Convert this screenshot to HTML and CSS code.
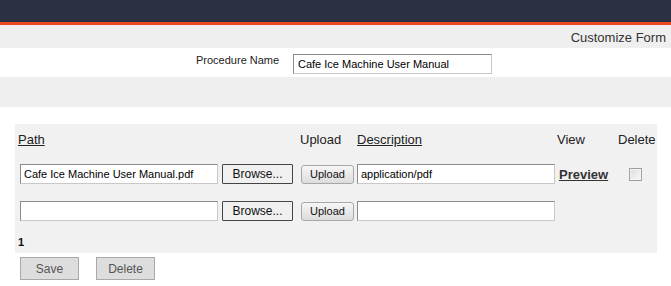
FILE: index.html
```html
<!DOCTYPE html>
<html lang="en">
<head>
  <meta charset="UTF-8">
  <title>Customize Form</title>
  <link rel="stylesheet" href="styles.css">
</head>
<body>

  <!-- Top bar -->
  <div class="topbar"></div>

  <!-- Title strip -->
  <div class="title-strip">Customize Form</div>

  <!-- Procedure name -->
  <div class="proc-row">
    <label class="proc-label" for="proc-name">Procedure Name</label>
    <input id="proc-name" class="proc-input" type="text" value="Cafe Ice Machine User Manual">
  </div>

  <div class="grey-band"></div>

  <!-- Attachments -->
  <div class="files-panel">
    <div class="files-grid">
      <a class="col-head link" href="#">Path</a>
      <span></span>
      <span class="col-head">Upload</span>
      <a class="col-head link" href="#">Description</a>
      <span class="col-head">View</span>
      <span class="col-head">Delete</span>

      <input class="path-input" type="text" value="Cafe Ice Machine User Manual.pdf">
      <button class="browse-btn">Browse...</button>
      <button class="upload-btn">Upload</button>
      <input class="desc-input" type="text" value="application/pdf">
      <a class="preview" href="#">Preview</a>
      <span class="del-cell"><input type="checkbox" class="del-check"></span>

      <input class="path-input" type="text" value="">
      <button class="browse-btn">Browse...</button>
      <button class="upload-btn">Upload</button>
      <input class="desc-input" type="text" value="">
      <span></span>
      <span></span>
    </div>
    <div class="page-num">1</div>
  </div>

  <!-- Actions -->
  <div class="actions">
    <button class="action-btn">Save</button>
    <button class="action-btn">Delete</button>
  </div>

</body>
</html>
```

FILE: styles.css
```css
/* Basic styling */
body {
  font-family: "Liberation Sans", Arial, sans-serif;
  margin: 0;
  padding: 0;
  background-color: #ffffff;
  color: #222;
}

/* Top bar */
.topbar {
  height: 22px;
  background-color: #2b3142;
  border-bottom: 3px solid #e8481f;
}

.title-strip {
  height: 23px;
  background-color: #efefef;
  text-align: right;
  font-size: 13px;
  line-height: 25px;
  padding-right: 5px;
  color: #333;
}

/* Procedure name row */
.proc-row {
  display: flex;
  align-items: flex-start;
  height: 29px;
  padding-left: 196px;
  box-sizing: border-box;
  padding-top: 6px;
}

.proc-label {
  font-size: 11px;
  width: 97px;
  line-height: 13px;
}

.proc-input {
  width: 199px;
  height: 20px;
  box-sizing: border-box;
  border: 1px solid #8c8c8c;
  border-right-color: #c8c8c8;
  border-bottom-color: #c8c8c8;
  font-family: "Liberation Sans", Arial, sans-serif;
  font-size: 11px;
  padding: 0 4px;
  margin: 0;
  color: #000;
}

.grey-band {
  height: 30px;
  background-color: #efefef;
  margin-bottom: 17px;
}

/* Files panel */
.files-panel {
  margin-left: 15px;
  width: 642px;
  background-color: #f1f1f1;
  padding: 8px 0 4px 3px;
  box-sizing: border-box;
}

.files-grid {
  display: grid;
  grid-template-columns: 204px 78px 57px 200px 61px auto;
  row-gap: 17px;
  align-items: center;
}

.col-head {
  font-size: 13px;
  line-height: 16px;
  color: #222;
  margin-bottom: -1px;
}

.link {
  color: #222;
  text-decoration: underline;
}

.path-input,
.desc-input {
  height: 20px;
  box-sizing: border-box;
  border: 1px solid #8c8c8c;
  border-right-color: #c8c8c8;
  border-bottom-color: #c8c8c8;
  font-family: "Liberation Sans", Arial, sans-serif;
  font-size: 11px;
  padding: 0 3px;
  margin: 0;
  color: #000;
  background: #fff;
}

.path-input {
  width: 198px;
  margin-left: 2px;
}

.desc-input {
  width: 198px;
}

.browse-btn {
  width: 71px;
  height: 20px;
  border: 1px solid #444;
  background-color: #f0f0f0;
  font-family: "Liberation Sans", Arial, sans-serif;
  font-size: 12px;
  color: #111;
  padding: 0;
  margin: 0;
  border-radius: 1px;
}

.upload-btn {
  width: 53px;
  height: 19px;
  margin: 0 0 0 1px;
  border: 1px solid #a8a8a8;
  border-radius: 3px;
  background: linear-gradient(#f6f6f6, #dcdcdc);
  font-family: "Liberation Sans", Arial, sans-serif;
  font-size: 11px;
  color: #111;
  padding: 0;
}

.preview {
  font-size: 13px;
  font-weight: bold;
  color: #333;
  text-decoration: underline;
  margin-left: 2px;
}

.del-cell {
  display: flex;
  padding-left: 11px;
}

.del-check {
  appearance: none;
  width: 13px;
  height: 13px;
  margin: 0;
  border: 1px solid #a0a0a0;
  background: linear-gradient(135deg, #dcdcdc, #fafafa);
  box-shadow: inset 0 0 0 1px #f4f4f4;
}

.page-num {
  font-size: 11px;
  font-weight: bold;
  margin-top: 15px;
  line-height: 13px;
  color: #111;
}

/* Action buttons */
.actions {
  display: flex;
  gap: 17px;
  padding: 4px 0 0 20px;
}

.action-btn {
  width: 59px;
  height: 23px;
  background-color: #dddddd;
  border: 1px solid #a9a9a9;
  font-family: "Liberation Sans", Arial, sans-serif;
  font-size: 12px;
  color: #555;
  padding: 0;
  margin: 0;
}
```
